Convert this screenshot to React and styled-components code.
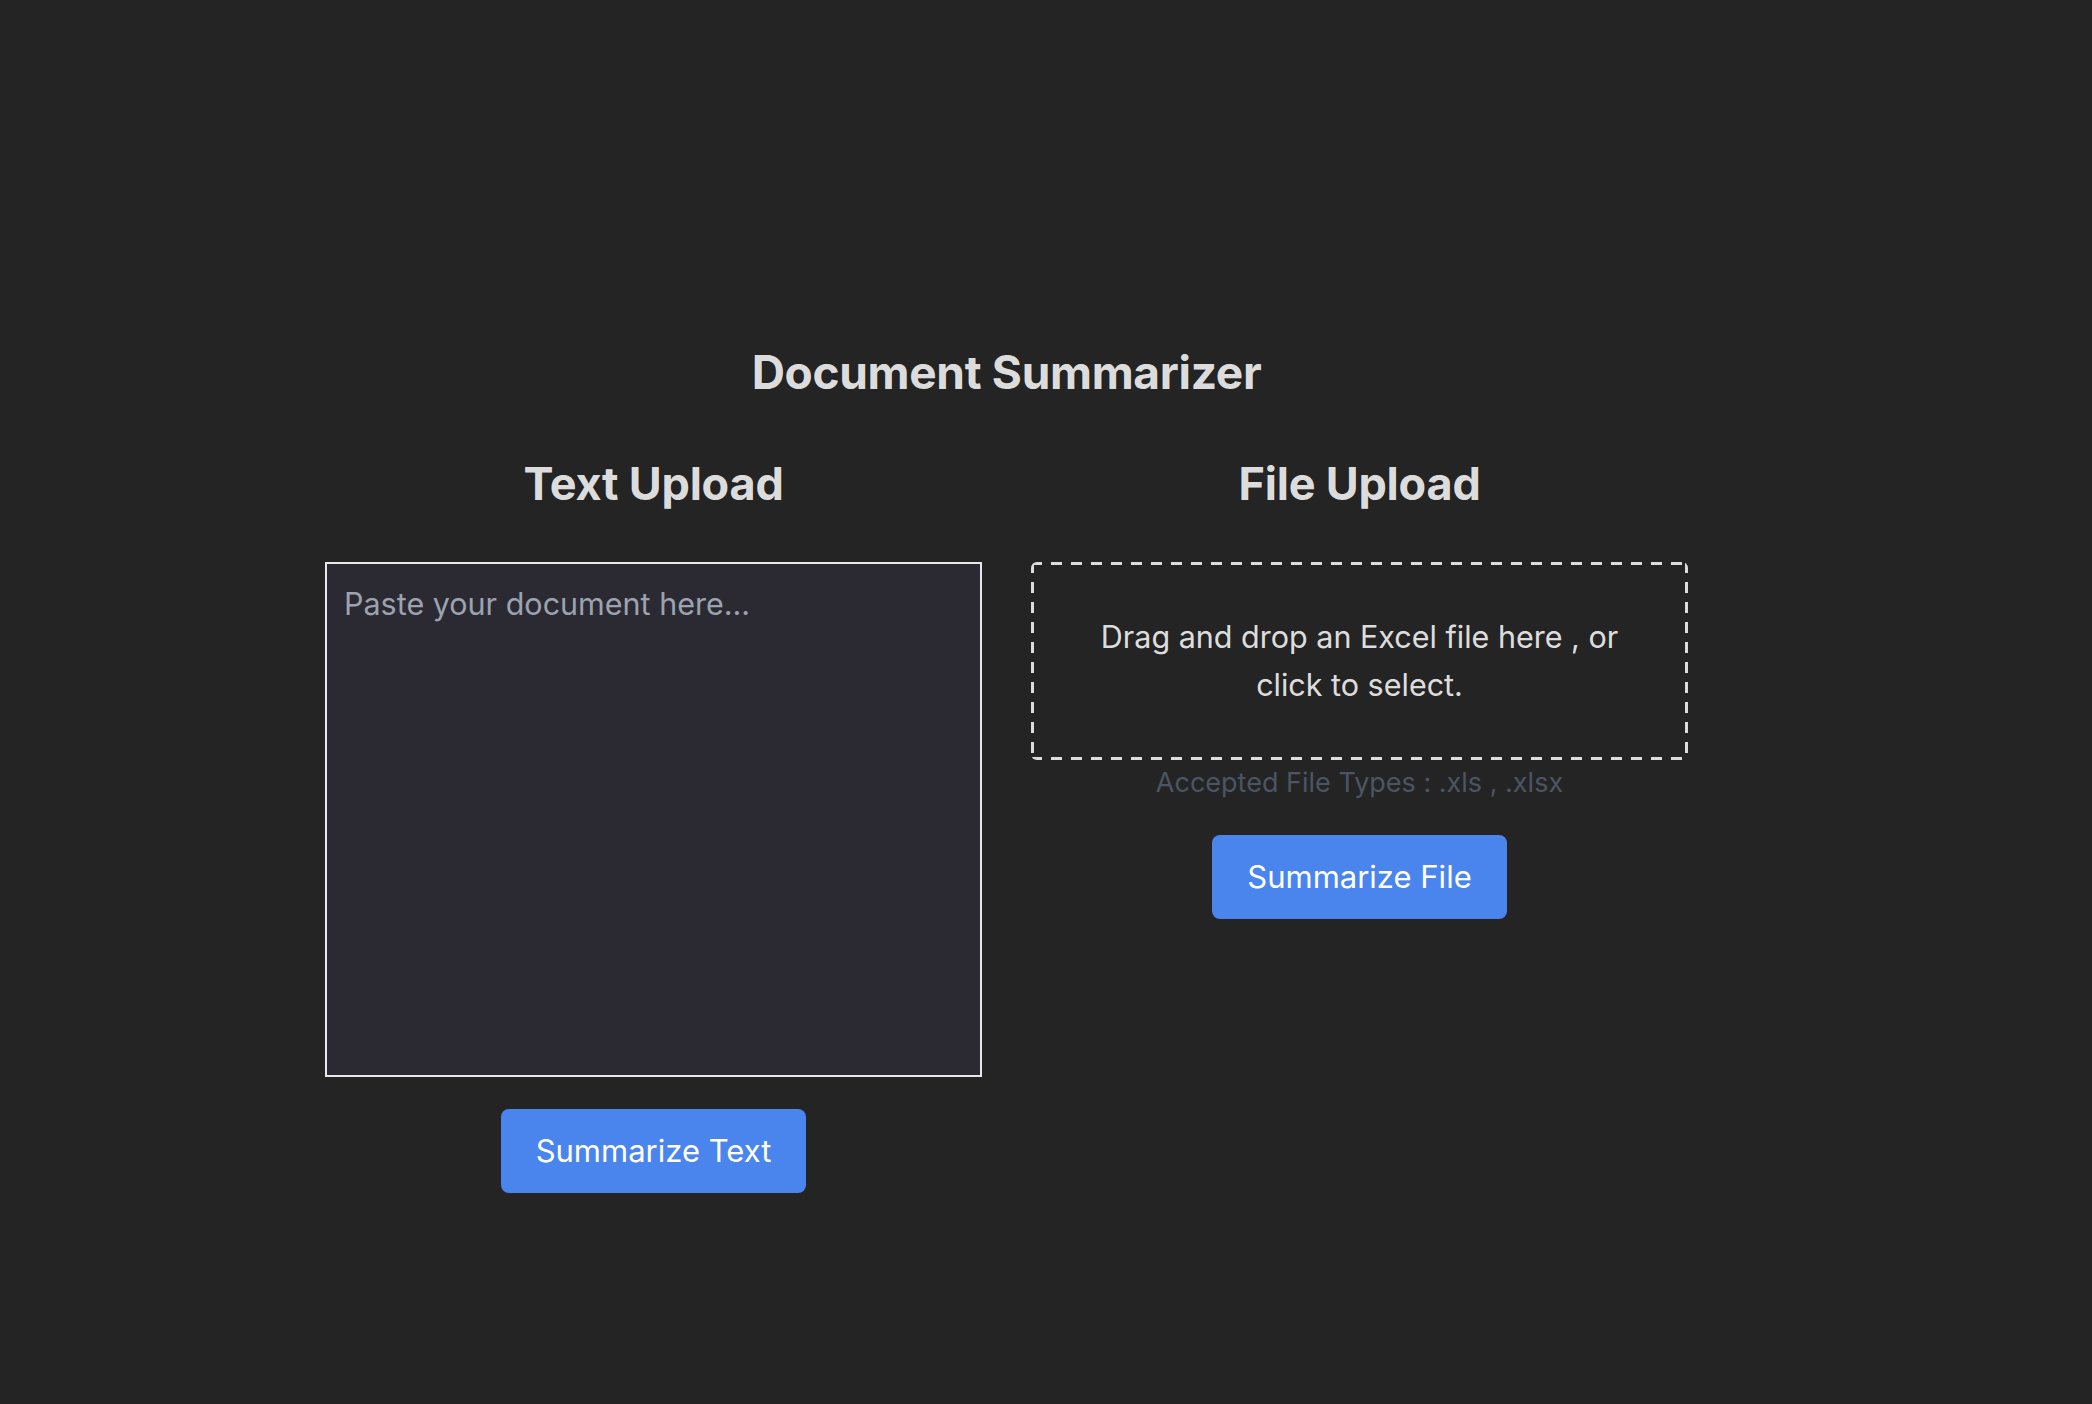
import React from 'react'
import styled, { createGlobalStyle } from 'styled-components'

const GlobalStyle = createGlobalStyle`
  html, body {
    margin: 0;
    padding: 0;
    background-color: #242424;
  }
  body {
    font-family: Inter, 'Noto Sans', 'Liberation Sans', sans-serif;
    line-height: 1.5;
    color: rgba(255, 255, 255, 0.87);
    min-height: 100vh;
  }
  * {
    box-sizing: border-box;
  }
`

const dash = '#dcdcdf'

export default function App() {
  return (
    <>
      <GlobalStyle />
      <Page>
        <Container>
          <Title>Document Summarizer</Title>
          <Columns>
            <Column>
              <Heading>Text Upload</Heading>
              <TextArea placeholder="Paste your document here..." />
              <Button>Summarize Text</Button>
            </Column>
            <Column>
              <Heading>File Upload</Heading>
              <DropZone>
                <DropText>Drag and drop an Excel file here , or click to select.</DropText>
              </DropZone>
              <Hint>Accepted File Types : .xls , .xlsx</Hint>
              <Button>Summarize File</Button>
            </Column>
          </Columns>
        </Container>
      </Page>
    </>
  )
}

const Page = styled.main`
  padding: 339px 0 0 325px;
  min-height: 100vh;
`

const Container = styled.div`
  width: 1363px;
  display: flex;
  flex-direction: column;
  align-items: center;
`

const Title = styled.h1`
  margin: 0 0 46px;
  font-size: 46px;
  font-weight: 700;
  line-height: 66px;
  letter-spacing: -0.3px;
  color: rgba(255, 255, 255, 0.87);
`

const Columns = styled.div`
  display: grid;
  grid-template-columns: 657px 657px;
  column-gap: 49px;
  align-items: start;
`

const Column = styled.section`
  display: flex;
  flex-direction: column;
  align-items: center;
`

const Heading = styled.h2`
  margin: 0 0 45px;
  font-size: 45px;
  font-weight: 700;
  line-height: 66px;
  letter-spacing: -0.2px;
  color: rgba(255, 255, 255, 0.87);
`

const TextArea = styled.textarea`
  display: block;
  width: 657px;
  height: 515px;
  padding: 16px 17px;
  border: 2px solid #e8e8ea;
  border-radius: 0;
  background-color: #2b2a33;
  color: rgba(255, 255, 255, 0.87);
  font-family: Inter, 'Noto Sans', 'Liberation Sans', sans-serif;
  font-size: 30.5px;
  line-height: 48px;
  resize: none;
  outline: none;

  &::placeholder {
    color: #9ca3af;
    opacity: 1;
  }
`

const DropZone = styled.div`
  width: 657px;
  height: 198px;
  padding: 48px 40px;
  border-radius: 6px;
  background:
    repeating-linear-gradient(90deg, ${dash} 0 11px, transparent 11px 20px) top left / 100% 3px no-repeat,
    repeating-linear-gradient(90deg, ${dash} 0 11px, transparent 11px 20px) bottom left / 100% 3px no-repeat,
    repeating-linear-gradient(180deg, ${dash} 0 11px, transparent 11px 20px) top left / 3px 100% no-repeat,
    repeating-linear-gradient(180deg, ${dash} 0 11px, transparent 11px 20px) top right / 3px 100% no-repeat;
  display: flex;
  align-items: center;
  justify-content: center;
  cursor: pointer;
`

const DropText = styled.p`
  margin: 0;
  font-size: 30.5px;
  line-height: 48px;
  text-align: center;
  color: rgba(255, 255, 255, 0.87);
`

const Hint = styled.p`
  margin: 3px 0 0;
  font-size: 27px;
  line-height: 40px;
  color: #4b5563;
`

const Button = styled.button`
  margin-top: 32px;
  padding: 18px 35px;
  border: none;
  border-radius: 8px;
  background-color: #4a85ed;
  color: #ffffff;
  font-family: Inter, 'Noto Sans', 'Liberation Sans', sans-serif;
  font-size: 31px;
  font-weight: 400;
  line-height: 48px;
  cursor: pointer;
`
